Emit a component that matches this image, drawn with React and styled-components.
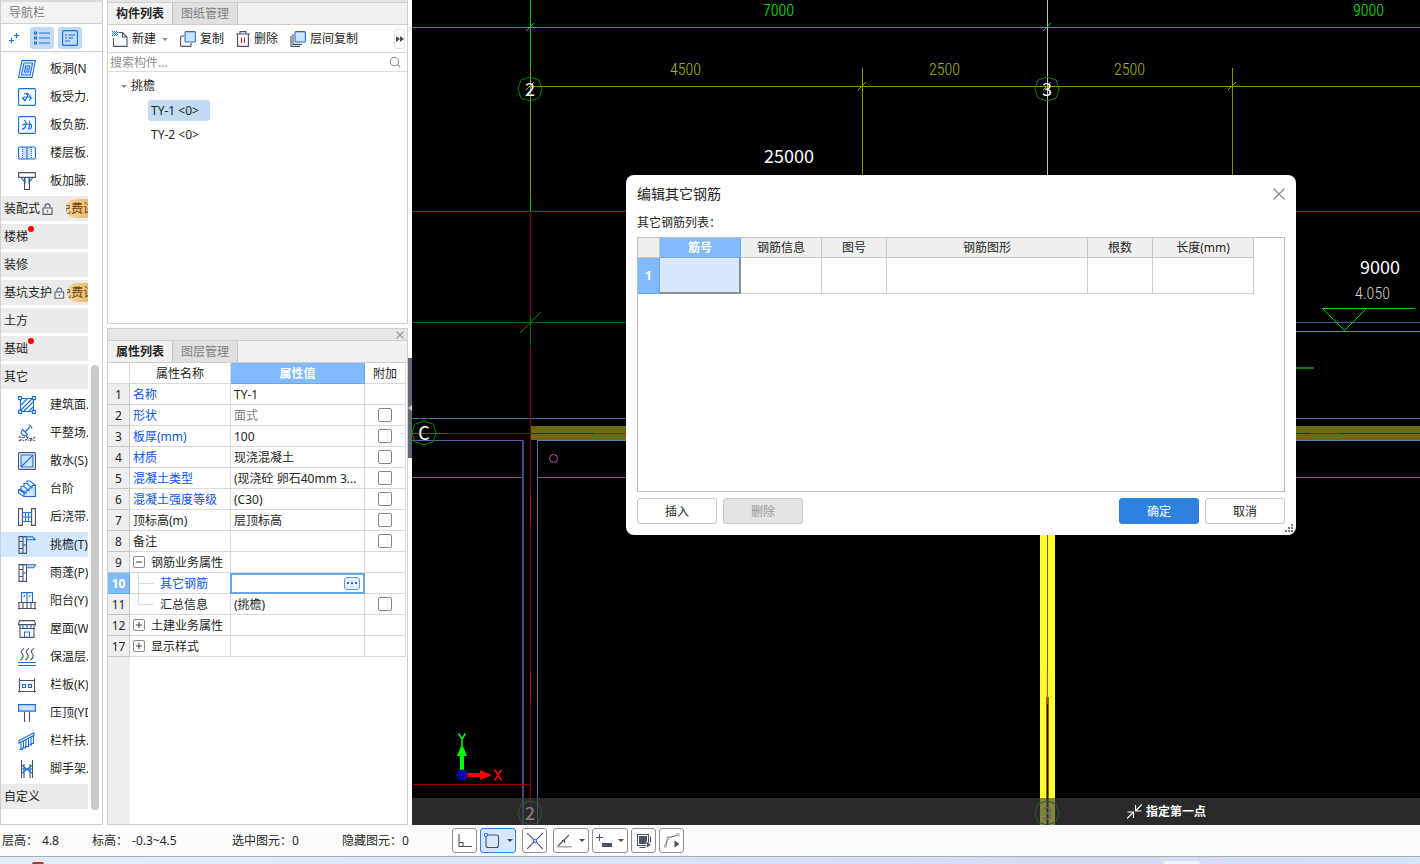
import React from "react";
import styled, { createGlobalStyle, css } from "styled-components";

const GlobalStyle = createGlobalStyle`
  *, *::before, *::after { box-sizing: border-box; }
  body {
    margin: 0;
    background: #fff;
    color: #262626;
    font: 12px/18px "Noto Sans", "Noto Sans CJK SC", sans-serif;
  }
  button, input { font: inherit; color: inherit; margin: 0; }
  button { padding: 0; cursor: pointer; }
`;

const BLUE = "#1a6fe0";
const LIGHT = "#cfe2fa";
const DARK = "#4a5266";

/* ---------- page frame ---------- */

const Page = styled.div`
  display: grid;
  grid-template-rows: minmax(0, 1fr) auto auto;
  height: 100vh;
  overflow: hidden;
`;

const Workspace = styled.main`
  display: flex;
  min-height: 0;
`;

/* ---------- navigation ---------- */

const Nav = styled.nav`
  flex: none;
  width: 103px;
  display: flex;
  flex-direction: column;
  border: 1px solid #cfcfcf;
  border-top: 0;
`;

const NavTitle = styled.h2`
  margin: 0;
  padding: 3px 8px 0;
  height: 24px;
  border-top: 2px solid #dcdcdc;
  border-bottom: 1px solid #d2d2d2;
  background: #f3f3f3;
  color: #7d7d7d;
  font-size: 12px;
  font-weight: 400;
  line-height: 16px;
`;

const NavTools = styled.div`
  display: flex;
  align-items: center;
  gap: 4px;
  height: 28px;
  padding-left: 1px;
  border-bottom: 1px solid #d2d2d2;
`;

const NavTool = styled.button`
  display: grid;
  place-items: center;
  width: 24px;
  height: 22px;
  border: 0;
  border-radius: 3px;
  background: ${(p) => (p.$on ? "#c2daf3" : "transparent")};
`;

const NavScroll = styled.div`
  flex: 1;
  display: flex;
  min-height: 0;
  padding-top: 4px;
  overflow: hidden;
`;

const NavList = styled.ul`
  flex: none;
  display: flex;
  flex-direction: column;
  gap: 3px;
  width: 87px;
  margin: 0;
  padding: 0;
  list-style: none;
`;

const NavItem = styled.li`
  display: flex;
  align-items: center;
  flex: none;
  height: 25px;
  padding-left: 17px;
  gap: 14px;
  overflow: hidden;
  white-space: nowrap;
  background: ${(p) => (p.$on ? "#d3e7fe" : "transparent")};
  svg { flex: none; }
`;

const NavSection = styled.li`
  display: flex;
  align-items: center;
  flex: none;
  height: 25px;
  padding-left: 3px;
  gap: 2px;
  overflow: hidden;
  white-space: nowrap;
  background: #ebebeb;
`;

const RedDot = styled.i`
  width: 6px;
  height: 6px;
  margin-bottom: 16px;
  margin-left: -2px;
  border-radius: 50%;
  background: #f00;
`;

const Trial = styled.span`
  display: flex;
  justify-content: center;
  width: 22px;
  height: 19px;
  padding-top: 1px;
  margin-left: auto;
  overflow: hidden;
  border-radius: 9px 0 0 9px;
  background: linear-gradient(90deg, #f3d7a3, #eabb6c);
  color: #6b4310;
`;

const NavBar = styled.div`
  width: 8px;
  height: 445px;
  margin: 0 0 14px 3px;
  align-self: flex-end;
  border-radius: 4px;
  background: #cbcbcb;
`;

/* ---------- side panels ---------- */

const Side = styled.div`
  flex: none;
  display: flex;
  flex-direction: column;
  gap: 4px;
  width: 301px;
  margin-left: 4px;
`;

const Panel = styled.section`
  display: flex;
  flex-direction: column;
  min-height: 0;
  flex: ${(p) => (p.$grow ? "1" : "0 0 324px")};
  border: 1px solid #cfcfcf;
  border-top-width: ${(p) => (p.$grow ? "1px" : "0")};
`;

const PanelStrip = styled.div`
  display: flex;
  align-items: center;
  justify-content: flex-end;
  flex: none;
  height: ${(p) => p.$h}px;
  padding-right: 3px;
  background: #e6e6e6;
`;

const CloseButton = styled.button`
  display: grid;
  place-items: center;
  border: 0;
  background: transparent;
`;

const Tabs = styled.div`
  display: flex;
  flex: none;
  height: 23px;
  background: #f1f1f1;
  border-top: 1px solid #cfcfcf;
  border-bottom: 1px solid #cfcfcf;
`;

const Tab = styled.button`
  width: 65px;
  border: 0;
  border-right: 1px solid #c3c3c3;
  line-height: 20px;
  font-weight: ${(p) => (p.$on ? 700 : 400)};
  color: ${(p) => (p.$on ? "#262626" : "#808080")};
  background: ${(p) => (p.$on ? "#f1f1f1" : "#e0e0e0")};
`;

const Tools = styled.div`
  display: flex;
  align-items: center;
  flex: none;
  gap: 12px;
  height: 28px;
  padding: 1px 2px 0 4px;
  border-bottom: 1px solid #dcdcdc;
`;

const Tool = styled.button`
  display: flex;
  align-items: center;
  gap: 4px;
  border: 0;
  background: transparent;
  white-space: nowrap;
`;

const Caret = styled.i`
  margin-left: ${(p) => p.$gap || 0}px;
  border: 3px solid transparent;
  border-top-color: ${(p) => p.$color || "#8a8a8a"};
  border-bottom: 0;
`;

const MoreButton = styled.button`
  display: grid;
  place-items: center;
  width: 11px;
  height: 20px;
  margin-left: auto;
  border: 1px solid #e4e4e4;
  border-radius: 3px;
  background: #fff;
`;

const SearchRow = styled.label`
  display: flex;
  align-items: center;
  flex: none;
  height: 19px;
  padding: 0 6px 0 2px;
  border-bottom: 1px solid #dcdcdc;
`;

const SearchInput = styled.input`
  flex: 1;
  min-width: 0;
  height: 18px;
  padding: 1px 0 0;
  border: 0;
  outline: 0;
  background: transparent;
  &::placeholder { color: #8e8e8e; opacity: 1; }
`;

const Tree = styled.ul`
  margin: 0;
  padding: 2px 0 0 13px;
  list-style: none;
  ul { margin: 0; padding: 0 0 0 27px; list-style: none; }
`;

const TreeNode = styled.div`
  display: flex;
  align-items: center;
  gap: 4px;
  height: 24px;
`;

const Leaf = styled.span`
  min-width: 62px;
  padding: 2px 4px 1px 3px;
  border-radius: 3px;
  white-space: pre;
  background: ${(p) => (p.$on ? "#c2daf3" : "transparent")};
`;

/* ---------- property grid ---------- */

const GridArea = styled.div`
  flex: 1;
  min-height: 0;
  background: linear-gradient(90deg, #efefef 22px, #fff 22px);
`;

const PropTable = styled.table`
  width: 298px;
  table-layout: fixed;
  border-collapse: separate;
  border-spacing: 0;
  line-height: 18px;
  th, td {
    height: 21px;
    padding: 2px 3px 0;
    border-right: 1px solid #d9d9d9;
    border-bottom: 1px solid #d9d9d9;
    font-weight: 400;
    text-align: left;
    white-space: nowrap;
    background: #fff;
  }
  thead th { text-align: center; }
  tbody td:last-child { padding: 0; }
`;

const Active = css`
  && {
    background: #80bafa;
    border-color: #6aa9e8;
    color: #fff;
    font-weight: 700;
  }
`;

const ValueHead = styled.th`${Active}`;

const RowNo = styled.th`
  && {
    padding: 2px 0 0;
    text-align: center;
    background: #efefef;
    border-color: #c6c6c6;
  }
  ${(p) => p.$on && Active}
`;

const NameCell = styled.td`
  color: ${(p) => (p.$blue ? "#0b55f0" : "inherit")};
  && { padding: 0 3px; }
`;

const NameBox = styled.div`
  display: flex;
  align-items: center;
  height: 20px;
  span { padding-top: 2px; }
`;

const Expander = styled.button`
  display: grid;
  place-items: center;
  width: 12px;
  height: 12px;
  margin-right: 6px;
  border: 1px solid #8b8b8b;
  border-radius: 2px;
  background: #fff;
`;

const Branch = styled.i`
  align-self: flex-start;
  width: 16px;
  height: ${(p) => (p.$last ? 11 : 20)}px;
  margin: 0 6px 0 5px;
  border-left: 1px solid #dcdcdc;
  background: linear-gradient(#dcdcdc, #dcdcdc) 0 10px / 16px 1px no-repeat;
`;

const ValueCell = styled.td`
  color: ${(p) => (p.$muted ? "#808080" : "inherit")};
  && { padding: ${(p) => (p.$edit ? "0" : "2px 3px 0")}; }
`;

const Editor = styled.div`
  display: flex;
  align-items: center;
  height: 21px;
  margin: -1px -1px -1px -1px;
  padding-right: 3px;
  border: 2px solid #68a6e8;
  input { flex: 1; min-width: 0; height: 16px; border: 0; outline: 0; padding: 0 2px; background: transparent; }
`;

const DotsButton = styled.button`
  display: grid;
  place-items: center;
  width: 16px;
  height: 13px;
  border: 1px solid #5a9de6;
  border-radius: 3px;
  background: #e4f0fd;
`;

const Check = styled.input`
  appearance: none;
  display: block;
  width: 14px;
  height: 14px;
  && { margin: 0 auto; }
  border: 1px solid #858585;
  border-radius: 2px;
  background: #fff;
`;

/* ---------- drawing area ---------- */

const Splitter = styled.div`
  flex: none;
  display: flex;
  align-items: flex-start;
  width: 4px;
  padding-top: 358px;
`;

const SplitHandle = styled.button`
  display: grid;
  place-items: center;
  width: 4px;
  height: 100px;
  border: 0;
  background: #5f6772;
`;

const Canvas = styled.div`
  position: relative;
  flex: 1;
  min-width: 0;
  overflow: hidden;
  background: #000;
`;

const Drawing = styled.svg`
  display: block;
  width: 100%;
  height: 100%;
  font-family: "Noto Sans CJK SC", sans-serif;
  font-size: 18px;
`;

const CadText = styled.text`
  font-family: "Roboto Condensed", "Open Sans Condensed", "Noto Sans CJK SC", sans-serif;
  font-size: 16px;
  font-weight: 300;
`;

const CommandBar = styled.div`
  position: absolute;
  left: 0;
  right: 0;
  bottom: 0;
  display: flex;
  align-items: center;
  justify-content: flex-end;
  gap: 4px;
  height: 27px;
  padding-right: 214px;
  background: rgba(65, 65, 65, 0.65);
  color: #fff;
  font-weight: 700;
`;

/* ---------- dialog ---------- */

const Dialog = styled.section`
  position: absolute;
  top: 175px;
  left: 214px;
  display: flex;
  flex-direction: column;
  width: 670px;
  padding: 0 11px 11px;
  border-radius: 8px;
  background: #fff;
`;

const DialogHead = styled.header`
  display: flex;
  align-items: center;
  justify-content: space-between;
  height: 38px;
  h1 { margin: 0; font-size: 14px; font-weight: 400; line-height: 20px; }
`;

const DialogLabel = styled.p`
  margin: 0;
  height: 24px;
  line-height: 20px;
`;

const BarBox = styled.div`
  height: 255px;
  border: 1px solid #bfbfbf;
`;

const BarTable = styled.table`
  width: 616px;
  table-layout: fixed;
  border-collapse: separate;
  border-spacing: 0;
  th, td {
    padding: 0;
    border-right: 1px solid #d0d0d0;
    border-bottom: 1px solid #d0d0d0;
    font-weight: 400;
  }
  thead th { height: 20px; padding-top: 1px; line-height: 18px; background: #efefef; border-color: #c6c6c6; }
  tbody th, td { height: 36px; }
`;

const BarHead = styled.th`${(p) => p.$on && Active}`;

const BarInput = styled.input`
  display: block;
  width: 81px;
  height: 36px;
  && { margin: 0 -1px -1px 0; }
  padding: 0 3px;
  border: 0;
  border-right: 2px solid #8b8f94;
  border-bottom: 2px solid #8b8f94;
  outline: 0;
  background: #d8e9fd;
`;

const DialogFoot = styled.footer`
  display: flex;
  gap: 6px;
  padding-top: 6px;
`;

const Push = styled.button`
  width: 80px;
  height: 26px;
  padding-top: 2px;
  border: 1px solid #c8c8c8;
  border-radius: 3px;
  background: #fff;
  &:nth-child(3) { margin-left: auto; }
  &:disabled { background: #e4e4e4; color: #9a9a9a; }
  ${(p) => p.$primary && css`background: #2d82e0; border-color: #2d82e0; color: #fff;`}
`;

const Grip = styled.svg`
  position: absolute;
  right: 2px;
  bottom: 2px;
`;

/* ---------- status bar ---------- */

const Status = styled.footer`
  display: flex;
  align-items: center;
  height: 31px;
  background: #fcfcfc;
`;

const Readout = styled.span`
  display: flex;
  flex: none;
  gap: ${(p) => p.$gap}px;
  width: ${(p) => p.$w}px;
  padding-left: 2px;
  white-space: nowrap;
`;

const Snaps = styled.div`
  display: flex;
  gap: 3px;
`;

const Snap = styled.button`
  display: flex;
  align-items: center;
  justify-content: center;
  width: ${(p) => (p.$menu ? 36 : 25)}px;
  height: 25px;
  && { margin-right: ${(p) => (p.$end ? 3 : 0)}px; }
  border: 1px solid ${(p) => (p.$on ? "#2d82e0" : "#929292")};
  border-radius: 3px;
  background: ${(p) => (p.$on ? "#d8e7fc" : "#fff")};
`;

const Taskbar = styled.div`
  display: flex;
  align-items: flex-end;
  justify-content: space-between;
  height: 8px;
  padding: 0 220px 0 32px;
  overflow: hidden;
  border-top: 1px solid #a9adb5;
  background: linear-gradient(90deg, #e4eef9, #d9e5fa 35%, #d5d9ee 78%, #d4e3f8);
`;

const TaskIcon = styled.i`
  width: 12px;
  height: 2px;
  border-radius: 6px 6px 0 0;
  background: #b5392f;
`;

const TaskTab = styled.i`
  width: 37px;
  height: 3px;
  border-radius: 3px 3px 0 0;
  background: #f2f4fb;
`;

/* ---------- icons ---------- */

const Glyph = ({ w = 18, h = 18, c = DARK, children }) => (
  <svg width={w} height={h} viewBox={`0 0 ${w} ${h}`} fill="none" stroke={c} strokeWidth="1.1" aria-hidden="true">
    {children}
  </svg>
);

const icons = {
  hole: (
    <Glyph c={BLUE}>
      <path d="M4 .6h13.4L14 17.4H.6z" />
      <path d="M6 3h8.6l-2.4 12H3.4z" fill={LIGHT} />
      <path d="M7.6 6h4l-1 6h-4z" />
      <path d="M9.4 7.6l-.6 3" />
    </Glyph>
  ),
  force: (
    <Glyph c={BLUE}>
      <rect x=".6" y=".6" width="16.8" height="16.8" rx="1" />
      <path d="M4 10.500c1-1.500 2-1.500 3-1.500h4c2 0 3 1 3 2M6 6c2-1 4-1 5 .5M9 4.500c1.500 2 .5 6-3 8.500M5 9.500c0 2 1 3 3 3M11.500 7c1.500 2 1 4-.5 6M8 6.500h3" />
    </Glyph>
  ),
  negative: (
    <Glyph c={BLUE}>
      <rect x=".6" y=".6" width="16.8" height="16.8" rx="1" />
      <path d="M4 9c3-1 7-1 10 0M6 4c2 1 2.500 3 2 5s-2 4-4 4.500M11 4.500c1 2 1 6-1 9M13 9c1 1.500.5 3-1.500 4.500" />
    </Glyph>
  ),
  deck: (
    <Glyph c={BLUE}>
      <path d="M4.500 3h9v12h-9z" fill={LIGHT} stroke="none" />
      <rect x=".6" y="3" width="16.800" height="12" rx="1" />
      <path d="M9 3v12" />
      <path d="M4.500 3v12M13.500 3v12" strokeDasharray="1 1" />
    </Glyph>
  ),
  haunch: (
    <Glyph>
      <path d="M3 5.500l4 5V5.500zM15 5.500l-4 5V5.500z" fill={LIGHT} stroke={BLUE} />
      <path d="M.6.6h16.800v4.800H.6zM6.500 5.500v12h5v-12" />
    </Glyph>
  ),
  area: (
    <Glyph c={BLUE}>
      <path d="M2.500 2.500h13v13h-13z" />
      <path d="M3 9l6-6M3 14L14 3M6 15l9-9M11 15l4-4" />
      <path d="M.6.6h3v3h-3zM14.400.6h3v3h-3zM.6 14.400h3v3h-3zM14.400 14.400h3v3h-3z" fill="#fff" />
    </Glyph>
  ),
  level: (
    <Glyph>
      <path d="M4.500 5.500l5 5c-2 1.500-4.500 1-5.500 0s-1-3 .5-5zM7 8l5-5M10.500 1c1.500 0 3 1.500 3.500 3.500" stroke={BLUE} fill="none" />
      <path d="M.6 13.500c2-2 3 1 5 0s2-2 4 0 4 1 7.500 0M1 17c2-2 4-1 5 0M7 16.500l2-1.500 2 1.500M12 17c1-1.500 3-1.500 5 0" strokeDasharray="3 1" />
    </Glyph>
  ),
  apron: (
    <Glyph>
      <rect x=".6" y=".6" width="16.8" height="16.8" rx="1" />
      <path d="M3 3h12v12H3z" fill={LIGHT} stroke={BLUE} />
      <path d="M3 15L15 3" stroke={BLUE} />
    </Glyph>
  ),
  steps: (
    <Glyph c={BLUE}>
      <path d="M6 16.500h11.400V5.500h-3.400v2.500h-3v2.500H8V13H6z" fill={LIGHT} />
      <path d="M.6 9.500L6 13M.6 9.500V13L6 16.500M.6 9.500H3L8 13M3 9.500V6.500h3l5 4M6 6.500V3.500h3l5 4.500M9 3.500V1h3l5.400 4.500" />
    </Glyph>
  ),
  strip: (
    <Glyph>
      <path d="M.6.6h3.800v16.800H.6zM13.600.6h3.800v16.800h-3.800z" />
      <path d="M4.500 4.500h9M4.500 9h9M4.500 13.500h9M7.500 4.500v9M10.500 4.500v9" stroke={BLUE} />
    </Glyph>
  ),
  eave: (
    <Glyph>
      <path d="M1 .6h7.500v16.800H1zM5 .6v16.800M1 5.500h4M5 9h3.500M1 12.500h4" />
      <path d="M8.500.8h6l3 3h-9z" fill={LIGHT} stroke={BLUE} />
    </Glyph>
  ),
  canopy: (
    <Glyph>
      <path d="M1 .6h7.500v16.800H1zM5 .6v16.800M1 5.500h4M5 9h3.500M1 12.500h4" />
      <path d="M8.500.8h9l-2 3h-7z" fill={LIGHT} stroke={BLUE} />
    </Glyph>
  ),
  balcony: (
    <Glyph>
      <path d="M3.500 10V.6h11V10M9 .6V10M5.500 5l1.500-2M11 5l1.500-2" stroke={BLUE} />
      <path d="M0 10.500h18M1 10.500v7M17 10.500v7M0 16.500h18M5 10.500v6M9 10.500v6M13 10.500v6" />
    </Glyph>
  ),
  roof: (
    <Glyph>
      <path d="M1.500.6h15l1 4h-17zM2 4.600v12.800h14V4.600M1 8.500h16" />
      <path d="M5 5v3M9 5v3M13 5v3M6.500 17v-5h5v5" stroke={BLUE} />
    </Glyph>
  ),
  heat: (
    <Glyph>
      <path d="M6 .5c-4 2.500-3 3.500-1.500 5.500s.5 4-2 6M11 .5c-4 2.500-3 3.500-1.500 5.500s.5 4-2 6M16 .5c-4 2.500-3 3.500-1.500 5.500s.5 4-2 6" />
      <path d="M0 14.500h18M0 17.500h18" stroke={BLUE} />
    </Glyph>
  ),
  rail: (
    <Glyph>
      <path d="M1.500 2.500v14M16.500 2.500v14M1 4.500h16M0 15.500h18" />
      <path d="M4.500 8.500h3v3h-3zM10.500 8.500h3v3h-3z" stroke={BLUE} />
    </Glyph>
  ),
  coping: (
    <Glyph>
      <path d="M6.500 7.500V18M11.500 7.500V18" />
      <path d="M.6.6h16.800v6.500H.6z" fill={LIGHT} stroke={BLUE} />
    </Glyph>
  ),
  handrail: (
    <Glyph c={BLUE}>
      <path d="M1 8.500L16 .8v2.400L1 11zM3 10v7.500M5.500 9v7.300M8 7.500v7.500M10.500 6.500v7.500M13 5v7.500M15.500 3.500V11M1.500 17.500h3v-1.500h3v-1.500h3V13h3v-1.500h2.500" />
    </Glyph>
  ),
  scaffold: (
    <Glyph>
      <path d="M3.500 0v18M14.500 0v18M6 4v14M12 4v14" />
      <path d="M3.500 5l11 8.500M14.500 5l-11 8.500M3.500 9h11" stroke={BLUE} />
    </Glyph>
  ),
};

const Lock = () => (
  <Glyph w={11} h={12} c="#596273">
    <path d="M1 5h9v6.400H1zM3 5V3.400C3 0 8 0 8 3.400V5M5.500 7.200v2" />
  </Glyph>
);

const Cross = ({ s = 8, c = "#9a9a9a" }) => (
  <Glyph w={s} h={s} c={c}>
    <path d={`M.5.5l${s - 1} ${s - 1}M${s - 0.5}.5L.5 ${s - 0.5}`} />
  </Glyph>
);

const before = [
  ["hole", "板洞(N"],
  ["force", "板受力."],
  ["negative", "板负筋."],
  ["deck", "楼层板."],
  ["haunch", "板加腋."],
];
const sections = [
  { name: "装配式", locked: true },
  { name: "楼梯", dot: true },
  { name: "装修" },
  { name: "基坑支护", locked: true },
  { name: "土方" },
  { name: "基础", dot: true },
  { name: "其它" },
];
const after = [
  ["area", "建筑面."],
  ["level", "平整场."],
  ["apron", "散水(S)"],
  ["steps", "台阶"],
  ["strip", "后浇带."],
  ["eave", "挑檐(T)"],
  ["canopy", "雨蓬(P)"],
  ["balcony", "阳台(Y)"],
  ["roof", "屋面(W"],
  ["heat", "保温层."],
  ["rail", "栏板(K)"],
  ["coping", "压顶(YD"],
  ["handrail", "栏杆扶."],
  ["scaffold", "脚手架."],
];

const rows = [
  { n: 1, name: "名称", blue: true, value: "TY-1" },
  { n: 2, name: "形状", blue: true, value: "面式", muted: true, check: true },
  { n: 3, name: "板厚(mm)", blue: true, value: "100", check: true },
  { n: 4, name: "材质", blue: true, value: "现浇混凝土", check: true },
  { n: 5, name: "混凝土类型", blue: true, value: "(现浇砼 卵石40mm 3...", check: true },
  { n: 6, name: "混凝土强度等级", blue: true, value: "(C30)", check: true },
  { n: 7, name: "顶标高(m)", value: "层顶标高", check: true },
  { n: 8, name: "备注", value: "", check: true },
  { n: 9, name: "钢筋业务属性", value: "", toggle: "-" },
  { n: 10, name: "其它钢筋", blue: true, edit: true, branch: "mid" },
  { n: 11, name: "汇总信息", value: "(挑檐)", check: true, branch: "last" },
  { n: 12, name: "土建业务属性", value: "", toggle: "+" },
  { n: 17, name: "显示样式", value: "", toggle: "+" },
];

const renderItem = ([icon, name]) => (
  <NavItem key={name} $on={icon === "eave"}>
    {icons[icon]}
    {name}
  </NavItem>
);

function Navigation() {
  return (
    <Nav>
      <NavTitle>导航栏</NavTitle>
      <NavTools>
        <NavTool aria-label="展开">
          <Glyph w={10} h={10} c={BLUE}>
            <path d="M7.500 0v5M5 2.500h5M2.500 5v5M0 7.500h5" />
          </Glyph>
        </NavTool>
        <NavTool $on aria-label="列表">
          <Glyph w={16} h={14} c={BLUE}>
            <path d="M5 2h11M5 7h11M5 12h11M.5 1h2v2h-2zM.5 6h2v2h-2zM.5 11h2v2h-2z" />
          </Glyph>
        </NavTool>
        <NavTool $on aria-label="详情">
          <Glyph w={16} h={16} c={BLUE}>
            <rect x=".6" y=".6" width="14.800" height="14.800" rx="1" />
            <path d="M3 5h2M6.500 5H13M3 8h2M6.500 8H11M3 11h5" />
          </Glyph>
        </NavTool>
      </NavTools>
      <NavScroll>
        <NavList>
          {before.map(renderItem)}
          {sections.map((s) => (
            <NavSection key={s.name}>
              {s.name}
              {s.locked && <Lock />}
              {s.locked && <Trial>免费试</Trial>}
              {s.dot && <RedDot />}
            </NavSection>
          ))}
          {after.map(renderItem)}
          <NavSection>自定义</NavSection>
        </NavList>
        <NavBar />
      </NavScroll>
    </Nav>
  );
}

function ComponentPanel() {
  return (
    <Panel>
      <PanelStrip $h={2} />
      <Tabs>
        <Tab $on>构件列表</Tab>
        <Tab>图纸管理</Tab>
      </Tabs>
      <Tools>
        <Tool>
          <Glyph w={16} h={16}>
            <path d="M6.500 1.500h4L15 6v9.400H1.500V7M10.500 1.500V6H15" />
            <path d="M0 .5h5M0 2.500h5M0 4.500h5" stroke={BLUE} strokeDasharray="1 1" strokeWidth="1" />
            <path d="M1 1.500h5M1 3.500h5" stroke={BLUE} strokeDasharray="1 1" strokeWidth="1" />
          </Glyph>
          新建
          <Caret $gap={2} />
        </Tool>
        <Tool>
          <Glyph w={16} h={16}>
            <path d="M4 5H1.600a1 1 0 00-1 1v8.400a1 1 0 001 1H10a1 1 0 001-1V12" />
            <rect x="5" y=".6" width="10.400" height="10.400" rx="1" fill={LIGHT} stroke={BLUE} />
          </Glyph>
          复制
        </Tool>
        <Tool>
          <Glyph w={14} h={16}>
            <path d="M0 3h14M4 3V.6h6V3M1.600 3v12.400h10.800V3" />
            <path d="M5.500 6.500v5.500M8.500 6.500v5.500" stroke="#d22" />
          </Glyph>
          删除
        </Tool>
        <Tool>
          <Glyph w={16} h={16}>
            <path d="M1 5v10.400h9M3 3v10.400h9" />
            <rect x="5" y=".6" width="10.400" height="10.400" rx="1" fill={LIGHT} stroke={BLUE} />
          </Glyph>
          层间复制
        </Tool>
        <MoreButton aria-label="更多">
          <Glyph w={8} h={6} c="none">
            <path d="M0 0l4 3-4 3zM4 0l4 3-4 3z" fill="#444b5a" />
          </Glyph>
        </MoreButton>
      </Tools>
      <SearchRow>
        <SearchInput placeholder="搜索构件..." aria-label="搜索构件" />
        <Glyph w={12} h={12} c="#8e8e8e">
          <circle cx="5.500" cy="5.500" r="4.200" />
          <path d="M8.500 8.500l2.500 2.500" />
        </Glyph>
      </SearchRow>
      <Tree>
        <li>
          <TreeNode>
            <Caret />
            挑檐
          </TreeNode>
          <ul>
            <li><TreeNode><Leaf $on>{"TY-1 <0>"}</Leaf></TreeNode></li>
            <li><TreeNode><Leaf>{"TY-2 <0>"}</Leaf></TreeNode></li>
          </ul>
        </li>
      </Tree>
    </Panel>
  );
}

function PropertyPanel() {
  return (
    <Panel $grow>
      <PanelStrip $h={11}>
        <CloseButton aria-label="关闭面板"><Cross s={8} /></CloseButton>
      </PanelStrip>
      <Tabs>
        <Tab $on>属性列表</Tab>
        <Tab>图层管理</Tab>
      </Tabs>
      <GridArea>
        <PropTable>
          <colgroup>
            <col width="22" />
            <col width="101" />
            <col width="134" />
            <col width="41" />
          </colgroup>
          <thead>
            <tr>
              <th />
              <th>属性名称</th>
              <ValueHead>属性值</ValueHead>
              <th>附加</th>
            </tr>
          </thead>
          <tbody>
            {rows.map((r) => (
              <tr key={r.n}>
                <RowNo scope="row" $on={r.edit}>{r.n}</RowNo>
                <NameCell $blue={r.blue}>
                  <NameBox>
                    {r.toggle && (
                      <Expander aria-label={r.name}>
                        <Glyph w={6} h={6} c="#444">
                          <path d={r.toggle === "+" ? "M0 3h6M3 0v6" : "M0 3h6"} />
                        </Glyph>
                      </Expander>
                    )}
                    {r.branch && <Branch $last={r.branch === "last"} />}
                    <span>{r.name}</span>
                  </NameBox>
                </NameCell>
                <ValueCell $muted={r.muted} $edit={r.edit}>
                  {r.edit ? (
                    <Editor>
                      <input aria-label={r.name} />
                      <DotsButton aria-label="编辑其它钢筋">
                        <Glyph w={10} h={2} c={BLUE}>
                          <path d="M0 1h2M4 1h2M8 1h2" strokeWidth="2" />
                        </Glyph>
                      </DotsButton>
                    </Editor>
                  ) : (
                    r.value
                  )}
                </ValueCell>
                <td>{r.check && <Check type="checkbox" aria-label={`附加 ${r.name}`} />}</td>
              </tr>
            ))}
          </tbody>
        </PropTable>
      </GridArea>
    </Panel>
  );
}

const AxisMark = ({ x, y, label, color = "#fff" }) => (
  <g>
    <path
      d={`M${x} ${y - 12}l9 3 3 9-3 9-9 3-9-3-3-9 3-9z`}
      fill="none"
      stroke="#008200"
      strokeWidth="1"
    />
    <text x={x} y={y + 7} fill={color} textAnchor="middle">{label}</text>
  </g>
);

const Line = ({ x1, y1, x2, y2, c, w = 1 }) => (
  <line x1={x1} y1={y1} x2={x2} y2={y2} stroke={c} strokeWidth={w} />
);

function Plan() {
  return (
    <Drawing role="img" aria-label="平面图">
      <g>
        <Line x1={0} y1={27.5} x2="100%" y2={27.5} c="#00c000" />
        <Line x1={118} y1={86.5} x2="100%" y2={86.5} c="#829b00" />
        <Line x1={0} y1={211.5} x2="100%" y2={211.5} c="#006e00" />
        <Line x1={0} y1={322.5} x2={400} y2={322.5} c="#006e00" />
        <Line x1={800} y1={322.5} x2="100%" y2={322.5} c="#4b5aa5" />
        <Line x1={800} y1={331.5} x2="100%" y2={331.5} c="#647dd2" />
        <Line x1={800} y1={368} x2={902} y2={368} c="#007d00" w={2} />
        <Line x1={0} y1={418.5} x2="100%" y2={418.5} c="#5564af" />
        <rect x={119} y={426} width="100%" height={14} fill="#6b6b14" />
        <Line x1={0} y1={433.5} x2="100%" y2={433.5} c="#7d0000" />
        <Line x1={0} y1={433.5} x2={35} y2={433.5} c="#ff0000" />
        <Line x1={182} y1={433.5} x2={214} y2={433.5} c="#dc0000" />
        <Line x1={898} y1={433.5} x2={929} y2={433.5} c="#dc0000" />
        <Line x1={0} y1={440.5} x2={112} y2={440.5} c="#5069a5" />
        <Line x1={125} y1={440.5} x2="100%" y2={440.5} c="#5f82b4" />
        <Line x1={0} y1={477.5} x2={111} y2={477.5} c="#96468c" />
        <Line x1={126} y1={477.5} x2="100%" y2={477.5} c="#96468c" />
        <Line x1={111} y1={440} x2={111} y2="100%" c="#3f4c80" w={2} />
        <Line x1={125.5} y1={440} x2={125.5} y2="100%" c="#5a6ea5" />
        <circle cx={141.5} cy={458.5} r={4} fill="none" stroke="#b45aaa" />
      </g>

      <g>
        <Line x1={118.5} y1={211} x2={118.5} y2="100%" c="#780000" />
        <Line x1={118.5} y1={0} x2={118.5} y2={68} c="#00c800" />
        <Line x1={118.5} y1={68} x2={118.5} y2={198} c="#829b00" />
        <Line x1={118.5} y1={198} x2={118.5} y2={211} c="#00c800" />
        <Line x1={118.5} y1={315} x2={118.5} y2={346} c="#006e00" />
        <Line x1={118.5} y1={494} x2={118.5} y2={525} c="#dc0000" />
        <Line x1={118.5} y1={672} x2={118.5} y2={703} c="#dc0000" />
        <Line x1={450.5} y1={68} x2={450.5} y2={200} c="#829b00" />
        <Line x1={820.5} y1={68} x2={820.5} y2={200} c="#829b00" />
        <Line x1={635.5} y1={0} x2={635.5} y2={200} c="#b4c8b4" />
        <Line x1={108} y1={333} x2={129} y2={312} c="#008c00" />
        <path d="M114 31l8-8M631 31l8-8" stroke="#00e600" />
        <path d="M446 90l8-8M631 90l8-8M816 90l8-8M114 90l8-8" stroke="#a0b400" />
        <path d="M910.500 308.500H1003M910.500 308.500l22 22 22-22" fill="none" stroke="#00dc00" />
      </g>

      <g>
        <rect x={628} y={500} width={15} height={330} fill="#ffff32" />
        <Line x1={635.5} y1={697} x2={635.5} y2="100%" c="#787800" w={3} />
        <Line x1={635.5} y1={704} x2={635.5} y2="100%" c="#3c0000" />
        <Line x1={635.5} y1={500} x2={635.5} y2={670} c="#965000" />
        <Line x1={635.5} y1={670} x2={635.5} y2={704} c="#f03200" />
      </g>

      <g>
        <CadText x={351} y={16} fill="#00f000">7000</CadText>
        <CadText x={941} y={16} fill="#00f000">9000</CadText>
        <CadText x={258} y={75} fill="#a5b900">4500</CadText>
        <CadText x={517} y={75} fill="#a5b900">2500</CadText>
        <CadText x={702} y={75} fill="#a5b900">2500</CadText>
        <CadText x={943} y={299} fill="#d2d2d2">4.050</CadText>
        <text x={352} y={163} fill="#fff">25000</text>
        <text x={948} y={274} fill="#fff">9000</text>
      </g>

      <AxisMark x={118} y={89} label="2" />
      <AxisMark x={635} y={89} label="3" />
      <AxisMark x={12} y={433} label="C" />
      <AxisMark x={118} y={813} label="2" />
      <AxisMark x={635} y={813} label="3" color="#aaa" />

      <g>
        <Line x1={0} y1={784.5} x2={118} y2={784.5} c="#8c0000" />
        <path d="M48 772v-16h-3l5-12 5 12h-3v16z" fill="#0f0" />
        <path d="M52 773h16v-3l12 5-12 5v-3H52z" fill="#f00" />
        <circle cx={50} cy={775} r={5.500} fill="#0000b4" />
        <path d="M46.500 733.500l3.500 5.500 3.500-5.500M50 739v6" fill="none" stroke="#0f0" strokeWidth="1.500" />
        <path d="M82.500 769.500l7 11M89.500 769.500l-7 11" fill="none" stroke="#f00" strokeWidth="1.500" />
      </g>
    </Drawing>
  );
}

function RebarDialog() {
  const heads = ["筋号", "钢筋信息", "图号", "钢筋图形", "根数", "长度(mm)"];
  return (
    <Dialog role="dialog" aria-labelledby="rebar-title">
      <DialogHead>
        <h1 id="rebar-title">编辑其它钢筋</h1>
        <CloseButton aria-label="关闭"><Cross s={12} c="#868686" /></CloseButton>
      </DialogHead>
      <DialogLabel>其它钢筋列表：</DialogLabel>
      <BarBox>
        <BarTable>
          <colgroup>
            <col width="22" />
            <col width="81" />
            <col width="81" />
            <col width="65" />
            <col width="201" />
            <col width="65" />
            <col width="101" />
          </colgroup>
          <thead>
            <tr>
              <BarHead />
              {heads.map((h, i) => (
                <BarHead key={h} $on={i === 0}>{h}</BarHead>
              ))}
            </tr>
          </thead>
          <tbody>
            <tr>
              <BarHead scope="row" $on>1</BarHead>
              <td><BarInput aria-label="筋号" /></td>
              <td />
              <td />
              <td />
              <td />
              <td />
            </tr>
          </tbody>
        </BarTable>
      </BarBox>
      <DialogFoot>
        <Push>插入</Push>
        <Push disabled>删除</Push>
        <Push $primary>确定</Push>
        <Push>取消</Push>
      </DialogFoot>
      <Grip width="9" height="9" viewBox="0 0 9 9" fill="#777" aria-hidden="true">
        <path d="M6 0h2v2H6zM3 3h2v2H3zM6 3h2v2H6zM0 6h2v2H0zM3 6h2v2H3zM6 6h2v2H6z" />
      </Grip>
    </Dialog>
  );
}

function StatusBar() {
  return (
    <Status>
      <Readout $w={90} $gap={4}><span>层高：</span><span>4.8</span></Readout>
      <Readout $w={140} $gap={4}><span>标高：</span><span>-0.3~4.5</span></Readout>
      <Readout $w={110} $gap={0}>选中图元：0</Readout>
      <Readout $w={112} $gap={0}>隐藏图元：0</Readout>
      <Snaps>
        <Snap aria-label="正交">
          <Glyph w={14} h={14}><path d="M1 0v12.500h13M1 8.500h4v4" /></Glyph>
        </Snap>
        <Snap $on $menu $end aria-label="对象捕捉">
          <Glyph w={16} h={16}>
            <rect x="2" y="2" width="12.500" height="12.500" rx="2" />
            <circle cx="2" cy="2" r="1.500" fill="#fff" stroke={BLUE} />
          </Glyph>
          <Caret $gap={7} $color="#444b5a" />
        </Snap>
        <Snap $end aria-label="交点捕捉">
          <Glyph w={16} h={16}>
            <path d="M0 0l16 16M16 0L0 16" />
            <circle cx="8" cy="8" r="1.500" fill="#fff" stroke={BLUE} />
          </Glyph>
        </Snap>
        <Snap $menu aria-label="角度捕捉">
          <Glyph w={16} h={14}>
            <path d="M1 12L12 1M5 6.500h2.500V9" />
            <path d="M0 12.800h15" stroke="#a5a9b1" strokeWidth="1.500" />
          </Glyph>
          <Caret $gap={6} $color="#444b5a" />
        </Snap>
        <Snap $menu aria-label="动态输入">
          <Glyph w={16} h={14}>
            <path d="M3.500 0v7M0 3.500h7" />
            <path d="M6 9h10v4H6z" fill={DARK} stroke="none" />
          </Glyph>
          <Caret $gap={6} $color="#444b5a" />
        </Snap>
        <Snap aria-label="窗选">
          <Glyph w={16} h={16}>
            <path d="M3 3h8v8H3z" fill={DARK} stroke="none" />
            <path d="M1.500 1.500h11v11h-11zM3.500 14.500h6M14.500 3.500v6" />
            <path d="M10.500 8l4.500 4-4.500 3z" fill={DARK} stroke="#fff" strokeWidth=".5" />
          </Glyph>
        </Snap>
        <Snap aria-label="折线选">
          <Glyph w={16} h={16} c="#6b7180">
            <path d="M1.500 13L4 5l10-3" />
            <path d="M.5 12h2v2h-2zM3 4h2v2H3zM13 .8h2v2h-2z" fill="#fff" stroke="#a5a9b1" />
            <path d="M11 8.500l3.500 2.500-3.500 2.500z" fill={DARK} stroke={DARK} />
          </Glyph>
        </Snap>
      </Snaps>
    </Status>
  );
}

export default function App() {
  return (
    <Page>
      <GlobalStyle />
      <Workspace>
        <Navigation />
        <Side>
          <ComponentPanel />
          <PropertyPanel />
        </Side>
        <Splitter>
          <SplitHandle aria-label="收起面板">
            <Glyph w={4} h={6} c="none"><path d="M4 0v6L0 3z" fill="#c4c8ce" /></Glyph>
          </SplitHandle>
        </Splitter>
        <Canvas>
          <Plan />
          <CommandBar>
            <Glyph w={15} h={15} c="#fff">
              <path d="M15 .5L8.500 7M8.500 1v6h6M0 14.500L6.500 8M.5 8h6v6" />
            </Glyph>
            指定第一点
          </CommandBar>
          <RebarDialog />
        </Canvas>
      </Workspace>
      <StatusBar />
      <Taskbar>
        <TaskIcon />
        <TaskTab />
      </Taskbar>
    </Page>
  );
}
